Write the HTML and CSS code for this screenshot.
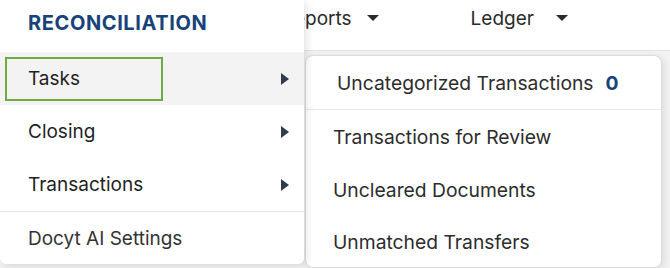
FILE: index.html
```html
<!DOCTYPE html>
<html lang="en">
  <head>
    <meta charset="UTF-8" />
    <meta name="viewport" content="width=device-width, initial-scale=1.0" />
    <title>Reconciliation Menu</title>
    <link rel="stylesheet" href="styles.css">
  </head>
  <body>
    <div class="topbar">
      <div class="nav-item">Reports <span class="caret"></span></div>
      <div class="nav-item wide">Ledger <span class="caret"></span></div>
    </div>
    <div class="page"></div>

    <!-- Reconciliation dropdown -->
    <div class="menu">
      <div class="menu-title">RECONCILIATION</div>
      <div class="menu-item active">
        <span class="focus-box">Tasks</span>
        <span class="arrow"></span>
      </div>
      <div class="menu-item">
        <span>Closing</span>
        <span class="arrow"></span>
      </div>
      <div class="menu-item">
        <span>Transactions</span>
        <span class="arrow"></span>
      </div>
      <div class="menu-item divided">Docyt AI Settings</div>
    </div>

    <!-- Tasks submenu -->
    <div class="submenu">
      <div class="sub-item first">
        Uncategorized Transactions <span class="count">0</span>
      </div>
      <div class="sub-item">Transactions for Review</div>
      <div class="sub-item">Uncleared Documents</div>
      <div class="sub-item">Unmatched Transfers</div>
    </div>
  </body>
</html>
```

FILE: styles.css
```css
body {
  margin: 0;
  font-family: Inter, "Liberation Sans", sans-serif;
  color: #222;
  background-color: #f3f3f4;
  height: 268px;
  overflow: hidden;
}
.topbar {
  height: 50px;
  background-color: #fff;
  border-bottom: 1px solid #e2e2e2;
  display: flex;
  align-items: center;
  padding-left: 282px;
  gap: 92px;
  font-size: 19px;
  color: #2a2a2a;
}
.nav-item {
  display: flex;
  align-items: center;
  gap: 15px;
  padding-bottom: 14px;
}
.nav-item.wide {
  gap: 22px;
}
.caret {
  width: 0;
  height: 0;
  border-left: 6px solid transparent;
  border-right: 6px solid transparent;
  border-top: 6px solid #2a2a2a;
}
.menu {
  position: absolute;
  top: 0;
  left: 0;
  width: 304px;
  background-color: #fff;
  border-radius: 0 0 6px 6px;
  box-shadow: 2px 2px 10px rgba(0, 0, 0, 0.12);
  z-index: 2;
}
.menu-title {
  height: 52px;
  display: flex;
  align-items: center;
  padding-left: 28px;
  font-size: 20px;
  font-weight: 700;
  letter-spacing: 0.6px;
  color: #17427a;
  padding-bottom: 6px;
  box-sizing: border-box;
}
.menu-item {
  height: 53px;
  display: flex;
  align-items: center;
  justify-content: space-between;
  padding: 0 15px 0 28px;
  font-size: 19px;
  color: #1f1f1f;
}
.menu-item.active {
  background-color: #f3f3f3;
  padding-left: 5px;
}
.focus-box {
  width: 158px;
  height: 44px;
  box-sizing: border-box;
  border: 2px solid #6fab45;
  display: flex;
  align-items: center;
  padding-left: 21px;
}
.arrow {
  width: 0;
  height: 0;
  border-top: 6px solid transparent;
  border-bottom: 6px solid transparent;
  border-left: 8px solid #2e3c4d;
}
.menu-item.divided {
  border-top: 1px solid #e6e6e6;
  height: 52px;
  color: #333;
}
.submenu {
  position: absolute;
  top: 55px;
  left: 305px;
  width: 357px;
  background-color: #fff;
  border: 1px solid #dcdcdc;
  border-radius: 8px;
  box-shadow: 2px 2px 8px rgba(0, 0, 0, 0.1);
  box-sizing: border-box;
  z-index: 1;
}
.sub-item {
  height: 53px;
  display: flex;
  align-items: center;
  padding-left: 27px;
  font-size: 19.3px;
  color: #2c2c2c;
}
.sub-item.first {
  padding-left: 31px;
  border-bottom: 1px solid #e8e8e8;
}
.sub-item:last-child {
  height: 51px;
}
.count {
  margin-left: 12px;
  font-weight: 700;
  color: #17427a;
}
```
